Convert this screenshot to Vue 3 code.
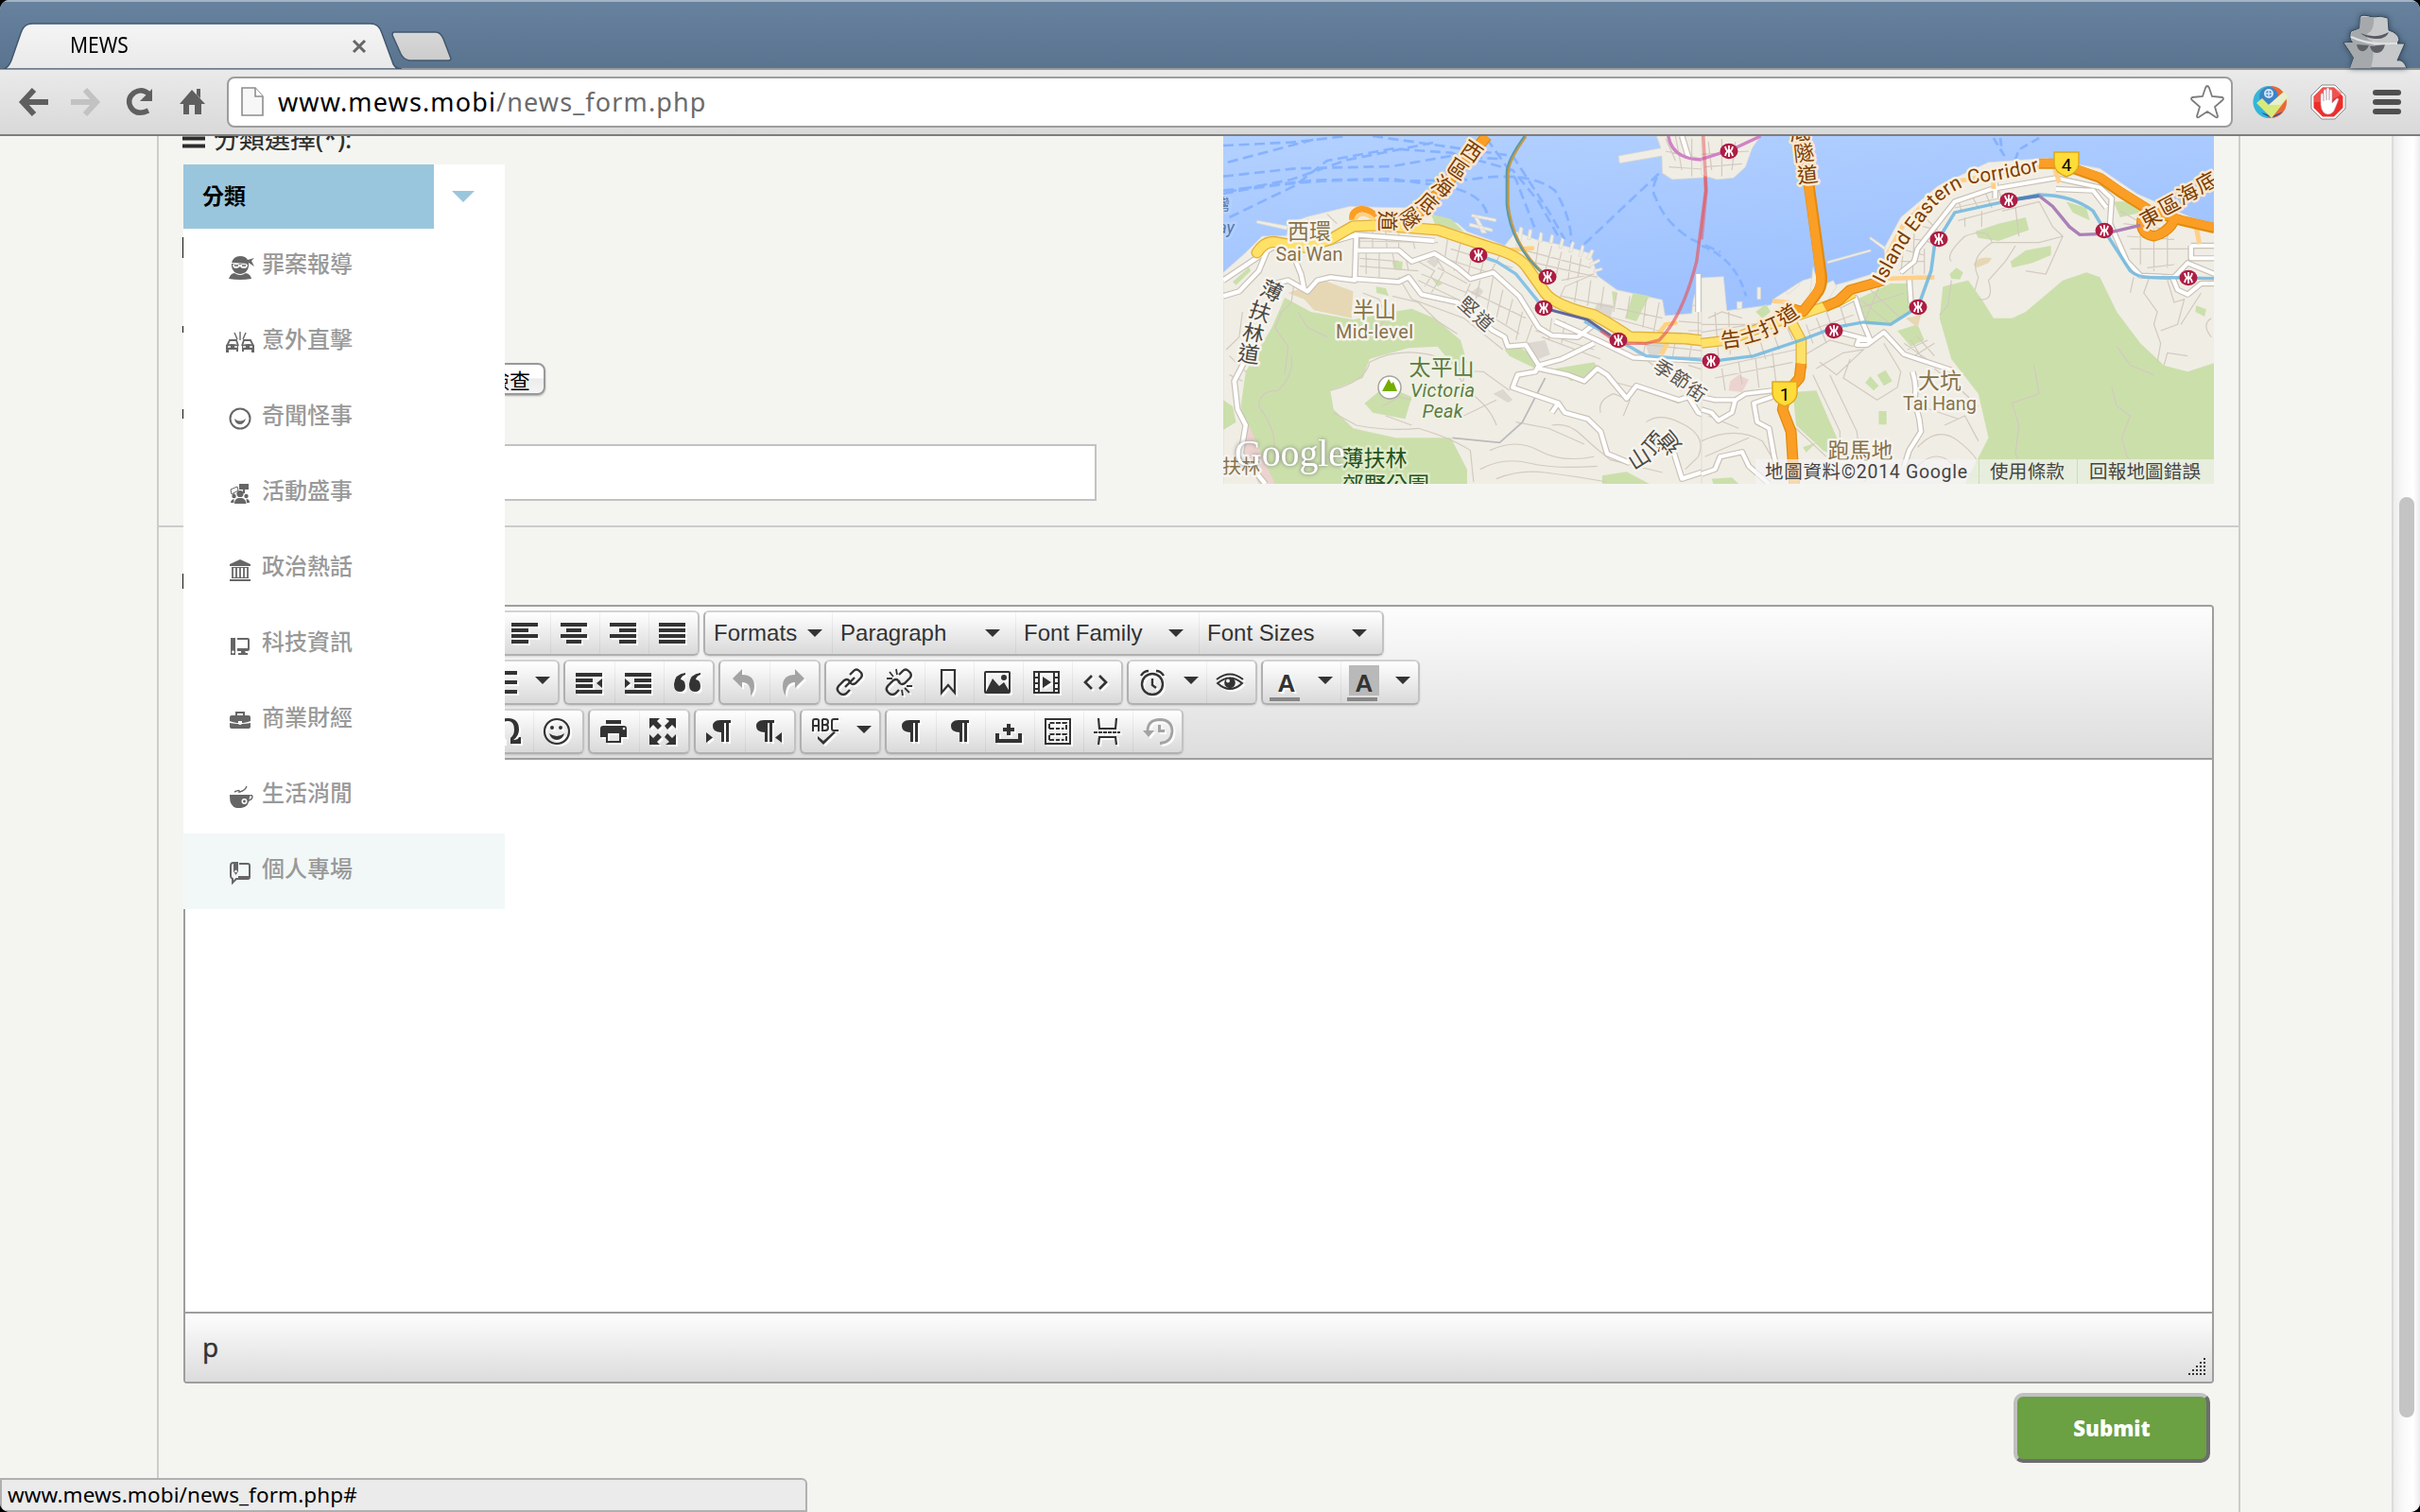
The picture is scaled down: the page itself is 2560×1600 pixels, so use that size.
<script setup>
const categories = [
  { name: '罪案報導', icon: '<path d="M5 9Q7 2 14 2Q20 2 22 6L29 4L26 7L29 13L23 9L23 10Z"/><path d="M5 10H23V13Q22 20 14 21Q6 20 5 13Z"/><path d="M6 11Q10 9 14 11Q18 9 22 11Q22 15 18 15Q15 15 14 13Q12 15 9 15Q6 14 6 11Z" fill="#fff"/><path d="M8 12h4M16 12h4" stroke="#666" stroke-width="1.3"/><path d="M2 26Q4 20 8 20Q14 24 20 20Q25 21 26 26Q14 28 2 26Z"/>' },
  { name: '意外直擊', icon: '<g fill="none" stroke="#666" stroke-width="1.800"><path d="M0 17L3 11H10L12 17"/><path d="M28 17L25 11H18L16 17"/></g><path d="M-1 16Q5 14 12 16V23H10V21H2V24H-1ZM29 16Q23 14 16 16V23H18V21H26V24H29Z"/><path d="M1 18H4M8 18H11M17 18H20M24 18H27" stroke="#fff" stroke-width="1.300"/><path d="M14 11V2M11 10L8 3M17 10L20 3" stroke="#666" stroke-width="1.400"/>' },
  { name: '奇聞怪事', icon: '<circle cx="14" cy="14" r="10.5" fill="none" stroke="#666" stroke-width="2"/><path d="M8 14Q14 19 20 14Q18 20 14 20Q9 20 8 14Z"/>' },
  { name: '活動盛事', icon: '<path d="M13 3h10v6h-4v4h-2V9h-4z"/><path d="M4 9L11 6L12 10L5 14ZM7 13L9 18" fill="none" stroke="#666"/><circle cx="14" cy="13.500" r="3.600"/><path d="M8 24Q8 19 12 18H16Q20 19 20.500 24Z"/><circle cx="7.500" cy="16" r="2.200"/><circle cx="20.500" cy="16" r="2.200"/><path d="M4 23Q4 20 7.500 19V23ZM20.500 19Q24 19 24 23H21Z"/>' },
  { name: '政治熱話', icon: '<path d="M3 8L14 3L25 8V10H3ZM5 11H23V12H5ZM3 24H25V26H3ZM5 22H23V23H5Z"/><path d="M6 12V22M10 12V22M14 12V22M18 12V22M22 12V22" stroke="#666" stroke-width="1.800"/>' },
  { name: '科技資訊', icon: '<path d="M4 6H9V24H4ZM11 6H22Q24 6 24 8V18Q24 20 22 20H19L20 22H22V24H12V22H15V20H11V17H22V8H11Z"/><circle cx="6.5" cy="21" r="1.4" fill="#fff"/>' },
  { name: '商業財經', icon: '<path d="M5 8H9V4H19V8H23Q25 8 25 10V14Q19 16 16 16V14H12V16Q9 16 3 14V10Q3 8 5 8ZM11 6V8H17V6ZM3 16Q9 17 12 17Q14 19 16 17Q20 17 25 16V20Q25 22 23 22H5Q3 22 3 20Z"/>' },
  { name: '生活消閒', icon: '<path d="M3 12H24V14Q24 25 15 26H10Q3 24 3 14Z"/><path d="M8 9Q14 6 13 9Q19 8 21 3M24 13Q27 12 27 14Q27 17 23 18" fill="none" stroke="#666" stroke-width="1.4"/><circle cx="18.500" cy="19" r="3" fill="#fff"/><circle cx="18.500" cy="19" r="1.400"/>' },
  { name: '個人專場', icon: '<path d="M7 4Q4 4 4 7V18Q4 20 6 21V25L10 21H22Q24 21 24 19V7Q24 5 22 5H13" fill="none" stroke="#666" stroke-width="2"/><path d="M7 3H12V13L9.500 17L7 13ZM12 18H24V21H12Z"/><circle cx="9.500" cy="13" r="1.300" fill="#fff"/>' },
]

const pilcrow = '<path d="M13 2H24V5H22V25H19V5H17V25H14V15Q5 15 5 8.500Q5 2 13 2Z"/>'
const link = '<g fill="none" stroke="currentColor" stroke-width="2.400"><path d="M14 6L18 2Q21 -1 24 2L26 4Q28 7 25 10L20 15Q17 17 15 15L13 13"/><path d="M14 22L10 26Q7 28 4 26L2 24Q-.5 21 2 18L8 12Q11 10 13 12L15 14"/>'
const glyphs = {
  left: '<path d="M0 3h28v4H0zM0 9h18v4H0zM0 15h28v4H0zM0 21h18v4H0z"/>',
  center: '<path d="M0 3h28v4H0zM6 9h16v4H6zM0 15h28v4H0zM6 21h16v4H6z"/>',
  right: '<path d="M0 3h28v4H0zM10 9h18v4H10zM0 15h28v4H0zM10 21h18v4H10z"/>',
  justify: '<path d="M0 3h28v4H0zM0 9h28v4H0zM0 15h28v4H0zM0 21h28v4H0z"/>',
  list: '<path d="M10 2h18v4H10zM10 12h18v4H10zM10 22h18v4H10zM2 2h4v4H2zM2 12h4v4H2zM2 22h4v4H2z"/>',
  outdent: '<path d="M0 4h28v4H0zM0 10h18v4H0zM0 16h18v4H0zM0 22h28v4H0zM28 10v10l-6-5z"/>',
  indent: '<path d="M0 4h28v4H0zM10 10h18v4H10zM10 16h18v4H10zM0 22h28v4H0zM0 10v10l6-5z"/>',
  quote: '<path d="M12 4V6Q8 7 7 11Q12 12 12 18Q12 24 6 24Q0 24 0 16Q1 5 12 4ZM28 4V6Q24 7 23 11Q28 12 28 18Q28 24 22 24Q16 24 16 16Q17 5 28 4Z"/>',
  undo: '<path d="M2 10L12 0V6Q25 6 25 18Q25 24 21 28Q22 14 12 14V20Z"/>',
  redo: '<path d="M26 10L16 0V6Q3 6 3 18Q3 24 6 28Q6 14 16 14V20Z"/>',
  link: link + '<path d="M9 19L19 9"/></g>',
  unlink: link + '<path d="M11 0L12 6M4 3L8 8M1 10H7M17 22L18 28M20 20L25 25M22 18H28" stroke-width="1.800"/></g>',
  bookmark: '<path d="M7 1H21V25L14 17L7 25Z" fill="none" stroke="currentColor" stroke-width="2.200"/>',
  image: '<path d="M2 2H26Q28 2 28 4V24Q28 26 26 26H2Q0 26 0 24V4Q0 2 2 2ZM2 4V24H26V4ZM2 24L9 10L16 18L21 14L26 22V24Z"/><circle cx="21" cy="9" r="3"/>',
  media: '<path d="M0 2H28V26H0ZM2 4V8H5V4ZM2 10V14H5V10ZM2 16V20H5V16ZM2 22V24H5V22ZM7 4V24H21V4ZM23 4V8H26V4ZM23 10V14H26V10ZM23 16V20H26V16ZM23 22V24H26V22ZM10 8L19 14L10 20Z" fill-rule="evenodd"/>',
  code: '<path d="M10 7L3 14L10 21M18 7L25 14L18 21" fill="none" stroke="currentColor" stroke-width="2.700"/>',
  clock: '<g fill="none" stroke="currentColor" stroke-width="2.400"><circle cx="14" cy="16" r="11"/><path d="M14 10V17L18 20M2 7Q5 2 10 2M26 7Q23 2 18 2"/></g>',
  eye: '<g fill="none" stroke="currentColor" stroke-width="2"><path d="M1 15Q14 4 27 15Q14 27 1 15Z"/><path d="M0 11Q14 0 28 11"/></g><circle cx="14" cy="14.500" r="5.800"/><circle cx="12" cy="12.500" r="2" fill="#eee"/>',
  omega: '<path d="M2 27V20H4Q5 23 9 23Q2 19 2 12Q2 0 14 0Q26 0 26 12Q26 19 20 23Q25 23 26 20H28V27H17V21Q21 18 21 12Q21 3 14 3Q7 3 7 12Q7 18 11 21V27Z"/>',
  smile: '<circle cx="14" cy="14" r="13" fill="none" stroke="currentColor" stroke-width="2.200"/><circle cx="9" cy="10" r="2"/><circle cx="18" cy="10" r="2"/><path d="M6 16Q14 22 22 16Q20 23 14 23Q8 23 6 16Z"/>',
  print: '<path d="M6 2H22V6H6ZM3 8H25Q28 8 28 11V20H22V16H6V20H0V11Q0 8 3 8Z"/><path d="M7 15H21V25H7Z" fill="none" stroke="currentColor" stroke-width="2"/><circle cx="25" cy="11" r="1.300" fill="#fff"/>',
  expand: '<path d="M0 0H11L8 3L13 8L9 12L4 7L0 11ZM28 0V11L24 7L19 12L16 8L21 3L17 0ZM0 28V17L4 21L9 16L13 20L8 25L11 28ZM28 28H17L21 25L16 20L19 16L24 21L28 17Z"/>',
  ltr: '<g transform="translate(2)">' + pilcrow + '</g><path d="M0 15v11l7-5.500z"/>',
  rtl: '<g transform="translate(-4)">' + pilcrow + '</g><path d="M28 15v11l-7-5.500z"/>',
  spell: '<path d="M1 14V3Q1 1 3 1H5Q7 1 7 3V14M1 8H7M11 1V13H14Q17 13 17 10T14 7H11M11 1H14Q17 1 17 4T14 7M28 1H23Q21 1 21 3V11Q21 13 23 13H28" fill="none" stroke="currentColor" stroke-width="2"/><path d="M6 19L12 24L23 14L25 15L12 28L6 22Z"/>',
  pilcrow,
  nbsp: '<path d="M0 16H4V22H24V16H28V26H0ZM12 6H16V10H20V14H16V18H12V14H8V10H12Z"/>',
  template: '<path d="M1 1H27V27H1Z" fill="none" stroke="currentColor" stroke-width="2"/><path d="M5 11V5H23V11H18M16 11H12M10 11H5M5 23V17H23V23H18M16 23H12M10 23H5" fill="none" stroke="currentColor" stroke-width="2" stroke-dasharray="5 1.500"/>',
  pagebreak: '<path d="M5 0L6 11H23L24 0M5 28L6 20H23L24 28" fill="none" stroke="currentColor" stroke-width="2.200"/><path d="M0 15H28" stroke="currentColor" stroke-width="2" stroke-dasharray="4 1"/>',
  restore: '<path d="M5 14Q5 1.500 18 1.500Q31 2 31 14Q30 26 18 26.500" fill="none" stroke="currentColor" stroke-width="2.800"/><path d="M0 13H12L6 20ZM16 7H19V12H23V15H16Z"/>',
}

const rows = [
  { offset: 332, groups: [
    [{ i: 'left' }, { i: 'center' }, { i: 'right' }, { i: 'justify' }],
    [{ t: 'Formats', w: 134 }, { t: 'Paragraph', w: 194 }, { t: 'Font Family', w: 194 }, { t: 'Font Sizes', w: 194 }],
  ] },
  { offset: 228, groups: [
    [{ i: 'list', s: 1 }, { i: 'list', s: 1 }],
    [{ i: 'outdent' }, { i: 'indent' }, { i: 'quote' }],
    [{ i: 'undo', d: 1 }, { i: 'redo', d: 1 }],
    [{ i: 'link' }, { i: 'unlink' }, { i: 'bookmark' }, { i: 'image' }, { i: 'media' }, { i: 'code' }],
    [{ i: 'clock', s: 1 }, { i: 'eye' }],
    [{ a: 1, s: 1 }, { a: 2, s: 1 }],
  ] },
  { offset: 314, groups: [
    [{ i: 'omega' }, { i: 'smile' }],
    [{ i: 'print' }, { i: 'expand' }],
    [{ i: 'ltr' }, { i: 'rtl' }],
    [{ i: 'spell', s: 1 }],
    [{ i: 'pilcrow' }, { i: 'pilcrow' }, { i: 'nbsp' }, { i: 'template' }, { i: 'pagebreak' }, { i: 'restore', d: 1 }],
  ] },
]

const stations = [[270, 126], [343, 149], [339, 182], [418, 216], [516, 238], [535, 16], [831, 68], [757, 109], [932, 100], [735, 181], [646, 206], [1021, 150]]

const labels = [
  { c: 'place', t: '西環', x: 91, y: 109, s: 23 },
  { c: 'place', t: 'Sai Wan', x: 91, y: 132, s: 20, w: 71 },
  { c: 'place', t: '半山', x: 160, y: 192, s: 23 },
  { c: 'place', t: 'Mid-level', x: 160, y: 214, s: 20, w: 82 },
  { c: 'park', t: '太平山', x: 231, y: 253, s: 23 },
  { c: 'park it', t: 'Victoria', x: 232, y: 276, s: 20, w: 68 },
  { c: 'park it', t: 'Peak', x: 232, y: 298, s: 20, w: 43 },
  { c: 'wood', t: '薄扶林', x: 160, y: 349, s: 23 },
  { c: 'wood', t: '郊野公園', x: 172, y: 377, s: 23 },
  { c: 'place', t: '扶林', x: 19, y: 357, s: 20 },
  { c: 'place', t: '大坑', x: 758, y: 267, s: 23 },
  { c: 'place', t: 'Tai Hang', x: 758, y: 290, s: 20, w: 78 },
  { c: 'place', t: '跑馬地', x: 674, y: 341, s: 23 },
  { c: 'bay it', t: 'ay', x: 3, y: 103, s: 18 },
  { c: 'bay', t: '灣', x: -1, y: 78, s: 16 },
]

const turned = [
  ['road', '薄', 51, 164, 24], ['road', '扶', 39, 186, 18], ['road', '林', 32, 209, 12], ['road', '道', 27, 231, 8],
  ['road sm', '堅', 260, 180, 42], ['road sm', '道', 276, 195, 42],
  ['road sm', '季', 466, 246, 34], ['road sm', '節', 484, 257, 34], ['road sm', '街', 501, 270, 34],
  ['road', '山', 440, 341, -32], ['road', '頂', 456, 325, -48], ['road', '道', 472, 324, -130],
  ['tunnel', '西', 263, 16, 34], ['tunnel', '區', 248, 35, 34], ['tunnel', '海', 232, 53, 36], ['tunnel', '底', 216, 71, 42], ['tunnel', '隧', 197, 87, 56], ['tunnel', '道', 174, 90, 90],
  ['tunnel', '底', 610, -4, -5], ['tunnel', '隧', 614, 18, -6], ['tunnel', '道', 618, 41, -6],
  ['tunnel', '告', 537, 215, -8], ['tunnel', '士', 558, 210, -16], ['tunnel', '打', 578, 202, -24], ['tunnel', '道', 597, 189, -34],
  ['tunnel', '東', 981, 86, -28], ['tunnel', '區', 1001, 73, -28], ['tunnel', '海', 1020, 61, -28], ['tunnel', '底', 1040, 49, -28],
]
</script>

<template>
  <div class="window">
    <header class="tabs">
      <svg class="tabshape" width="500" height="72" viewBox="0 0 500 72">
        <defs>
          <linearGradient id="tabfill" x2="0" y2="1"><stop stop-color="#f5f5f5" /><stop offset="1" stop-color="#e9e9e9" /></linearGradient>
          <linearGradient id="newfill" x2="0" y2="1"><stop stop-color="#d8d8d8" /><stop offset="1" stop-color="#cccccc" /></linearGradient>
        </defs>
        <path d="M0 72H4Q10 70 13 60L22 34Q25 24 34 24H392Q401 24 404 34L415 64Q417 72 425 72Z" fill="url(#tabfill)" stroke="#42576d" stroke-width="1.500" />
        <path d="M417 33H461Q466 33 469 40L477 61Q477 63 474 63H433Q427 62 424 56L415 36Q415 33 417 33Z" fill="url(#newfill)" stroke="#42576d" stroke-width="1.500" />
        <path d="M374 42L386 54M386 42L374 54" stroke="#666" stroke-width="3" />
      </svg>
      <span class="tabtitle">MEWS</span>
      <svg class="incognito" width="76" height="58" viewBox="0 0 76 58">
        <g stroke="#33475b" stroke-width="1">
          <path d="M10 58L14 47L3 31H13Q8 26 11 19L20 16L21 3Q24 1 34 4Q43 2 50 5L51 18Q61 21 62 28L60 32H68L60 50Q66 48 70 58Z" fill="#c6c8ca" />
        </g>
        <path d="M10 58L14 47L4 31H13Q9 26 12 20L20 16L21 4L35 4Q36 13 32 19Q22 25 34 30Q36 45 32 58Z" fill="#a6a9ac" />
        <path d="M21 21Q36 28 51 20Q48 28 36 27Q26 26 21 21Z" fill="#555b61" />
        <path d="M17 33L30 34Q27 41 22 40Q18 39 17 33ZM31 35L47 33Q45 42 38 42Q33 42 31 35Z" fill="#5d6064" />
        <path d="M11 25Q30 34 54 32L60 32" fill="none" stroke="#e0e1e2" stroke-width="2" />
      </svg>
    </header>

    <div class="toolbar">
      <svg class="nav" width="220" height="44" viewBox="0 0 220 44">
        <g fill="none" stroke="#5f5f5f" stroke-width="6">
          <path d="M51 22H25M36 9L24 22L36 35" />
          <path d="M75 22H101M90 9L102 22L90 35" stroke="#c2c2c2" />
          <path d="M157 13Q150 7 142 12Q134 18 138 27Q144 37 157 31" stroke-width="5.500" />
        </g>
        <path d="M161 8V21H148Z" fill="#5f5f5f" />
        <path d="M203 9L217 24H213V35H206V25H200V35H194V24H190ZM208 8H212V18L208 14Z" fill="#5f5f5f" />
      </svg>
      <div class="omnibox">
        <svg width="26" height="34" viewBox="0 0 26 34"><path d="M2 2H16L24 11V31H2Z" fill="#f7f7f7" stroke="#8d8d8d" stroke-width="1.600" /><path d="M16 2V11H24" fill="#fff" stroke="#8d8d8d" stroke-width="1.600" /></svg>
        <span class="url">www.mews.mobi<i>/news_form.php</i></span>
        <svg class="star" width="38" height="38" viewBox="0 0 38 38"><path d="M19 2Q20 2 21 4L24 13L35 14Q37 15 35 17L27 24L30 34Q30 36 28 35L19 29L10 35Q8 36 8 34L11 24L3 17Q1 15 3 14L14 13L17 4Q18 2 19 2Z" fill="#fff" stroke="#7c7c7c" stroke-width="1.800" /></svg>
      </div>
      <div class="extras">
        <svg width="40" height="38" viewBox="0 0 40 38">
          <circle cx="20" cy="19" r="17" fill="#e9683a" /><path d="M20 2A17 17 0 0 0 17 36L22 20Z" fill="#34b5d8" /><circle cx="18" cy="13" r="10" fill="#3f83c5" /><path d="M10 30Q22 40 33 29L22 34Z" fill="#2d4fa0" />
          <circle cx="18" cy="10" r="4" fill="none" stroke="#cfe6fb" stroke-width="2" /><path d="M18 6V14M14 10H22" stroke="#cfe6fb" stroke-width="1.500" />
          <path d="M5 20L11 15L18 22L34 8L39 13L21 36Z" fill="#d8ea7a" /><path d="M18 22L34 8L39 13L30 22Z" fill="#e8efcf" />
        </svg>
        <svg width="38" height="38" viewBox="0 0 38 38">
          <path d="M12 1H26L37 12V26L26 37H12L1 26V12Z" fill="#fff" stroke="#888" /><path d="M13 3.500H25L34.500 13V25L25 34.500H13L3.500 25V13Z" fill="#ee2d2a" /><path d="M4 19Q24 20 34 9L25 3.500H13L3.500 13Z" fill="#f26b66" opacity=".6" />
          <path d="M11 22V11Q12 8 14 11V18V7Q15 4 17 7V17V5Q18.500 3 20 5V17V7Q22 4 23 7V20L27 16Q29 14 30 16L26 26Q24 32 18 32Q12 31 11 22Z" fill="#fff" stroke="#b9a" stroke-width=".6" />
        </svg>
        <svg width="32" height="28" viewBox="0 0 32 28"><g fill="#4f4f4f"><rect x="1" y="1" width="30" height="6" rx="3" /><rect x="1" y="11" width="30" height="6" rx="3" /><rect x="1" y="21" width="30" height="6" rx="3" /></g></svg>
      </div>
    </div>

    <div class="viewport">
      <main class="card">
        <section class="top">
          <div class="fields">
            <h2><svg width="24" height="22" viewBox="0 0 24 22"><path d="M0 2h24M0 10.500h24M0 18.500h24" stroke="#2d2d2d" stroke-width="4" /></svg><span>分類選擇(*):</span></h2>
            <div class="check"><button>檢查</button></div>
            <div class="input"></div>
          </div>
          <svg class="map" width="1048" height="368" viewBox="0 0 1048 368">
            <defs>
              <linearGradient id="sea" x1="0" x2=".25" y2="1"><stop stop-color="#b3d1ff" /><stop offset=".5" stop-color="#a0c3ff" /><stop offset="1" stop-color="#93b9ff" /></linearGradient>
              <path id="corridor" d="M699 157Q721 114 741 90Q761 60 793 50Q830 46 871 35" />
              <path id="roadsWest" d="M41 550L90 535L150 470L180 395L300 400L450 355L690 375M450 350L445 500L370 490L330 500L300 535L240 500L200 510M260 430L280 480L290 530M41 500L200 390L350 390M445 495L580 505L610 490L650 545L760 570L870 660L905 680L915 710L970 705L1010 770L1080 750L1180 700M455 405L580 405L620 440L690 415L760 460L800 495L870 475L950 550L1010 650L1050 675L1130 680L1180 640M1060 630L1190 690L1300 745L1568 758M1010 770L1000 790L945 800L930 840L1070 890L1050 920M1070 890L1090 920L1160 940L1200 980L1220 1050L1290 1080M1010 780L1100 800L1150 820L1190 780L1220 800L1280 875L1310 835L1440 880L1470 870L1500 920L1568 945M120 730L75 820L85 910L110 960L95 1050L170 1146M1420 1030L1450 1130L1568 1090M1450 42L1470 110M1500 480V600" />
              <path id="roadsEast" d="M410 580L455 555L480 640L500 690L465 690L460 705L490 705L540 665L600 735L740 785M410 665L500 690M625 790Q640 840 630 880L645 940L650 980L615 1040L600 1090M615 490L620 570M590 475L630 440L640 400L750 250L860 210L1050 175L1180 205L1215 240L1210 320L1260 440L1300 485L1400 490L1440 445L1520 480M1050 210L1160 215L1200 270M870 190V240M1395 490L1410 530L1440 545L1480 510L1518 510M1450 390H1518M1450 390V430H1518M0 870L40 880L100 880L130 860L210 850M210 870L155 890L165 950L200 970L215 1060L230 1120M0 910L30 920L50 945L90 920L100 880M0 1115L40 1100L55 1060L120 1045L140 1090L200 1146" />
            </defs>
            <rect width="1048" height="368" fill="url(#sea)" />

            <g transform="translate(-14.100 -14) scale(.3444 .3333)" fill="none">
              <g stroke="#86b2ff" stroke-width="8" stroke-dasharray="32 16">
                <path d="M41 72L250 62L420 42M55 125L330 50M41 170L260 145L560 138L740 105L900 115M41 215L320 182L560 178L740 205Q850 230 855 310M50 220L250 180L420 118L700 60M60 300L260 200L360 120L560 82L740 95L930 150L1010 250L1070 360M41 225Q300 170 600 185L800 180Q980 150 1060 215Q1110 300 1110 380M850 50L940 180L1000 340M1150 385L1380 160Q1350 210 1370 240Q1400 320 1480 370L1568 410M500 42L930 105L1040 280L1090 370" />
              </g>
              <g fill="#f0ede5" stroke="#d9d6cd" stroke-width="2">
                <path d="M41 475L110 412L160 360L235 358L245 318L300 298L430 265L520 268L640 270L690 300L760 318L790 345L870 375L905 390L940 345L1000 370L1080 388L1170 415L1190 485L1250 530L1390 562L1398 612L1480 605L1485 560L1505 495L1568 490V1150H41Z" />
                <path d="M1372 42L1385 80L1255 105L1258 128L1388 105L1390 160L1420 180L1568 170V42Z" />
                <path d="M145 310L240 328L236 340L143 318ZM805 290L880 305L878 314L803 298ZM798 318L868 337V346L796 328ZM820 295L850 350H835L812 300ZM952 330L940 390H953L962 335ZM980 338L975 370H985L990 340ZM1014 347L1008 378H1020L1022 350ZM1048 354L1042 382H1053L1056 358ZM1080 365L1072 398H1082L1088 370ZM1112 376L1102 410H1112L1120 380ZM1142 388L1133 424H1143L1150 392ZM1172 402L1155 430L1168 435L1180 405ZM1196 432L1165 447L1170 455L1198 440ZM1205 460L1180 466V475L1205 467Z" />
              </g>
              <g fill="#cbdfab">
                <path d="M230 555L310 600L440 625L560 600L620 590L690 620L770 690L790 760L770 800L700 710L610 715L490 750L470 810L370 850L380 910L440 970L570 1000L740 1000L790 1100V1146H190L120 1040L95 900L110 790L190 650ZM41 880L70 900L80 950L41 975ZM475 890L540 835L620 870L600 940L500 920ZM1205 1120L1280 1108L1350 1146H1205ZM905 720L950 710L1010 755L1000 780L920 740ZM1060 780L1180 760L1200 790L1110 820ZM1300 540L1350 550L1310 630L1275 620ZM680 290L740 305L780 345L690 320ZM510 520L540 525L550 550L512 540ZM675 485L715 510L700 520ZM70 505L120 458L125 470L80 515ZM560 440L592 440L590 468L565 465ZM1235 535L1250 537L1240 590ZM1325 1020l12 10-5 20-12-10z" />
              </g>
              <path d="M240 540L350 500L440 535L435 620L320 595L290 560Z" fill="#e6d8b4" /><path d="M970 700L1030 690L1045 735L1010 750ZM870 860L900 845L930 880L915 888ZM1190 570L1240 580L1230 620L1180 600ZM665 440L685 425L705 440L690 460ZM800 540L825 520L840 535L825 555ZM1340 710L1400 690L1390 735L1350 740Z" fill="#dcd7d0" />
              <path d="M120 960L170 1080L200 1146H150L100 1040Z" fill="#ecd3d0" />
              <g stroke="#d3cabf" stroke-width="3.500">
                <path d="M240 330L260 370M300 305L320 355M360 290L390 320M460 350V395M500 345V410M540 345L545 410M580 350V405M620 360L630 400M460 375L700 380M460 430L580 440M480 410V480M520 410V490M560 410L570 460M600 420L610 470M460 455L640 470M640 440L690 470L660 520M690 420L720 470L680 540M730 370L720 440M770 380L750 470M810 390L790 500M850 400L830 480M890 420L860 480M740 400L930 460M720 430L900 490M700 460L790 510M640 500L780 570M650 480L790 540M800 510L770 580M830 500L810 590M870 490L850 600M900 530L880 620M930 560L910 640M790 530L970 620M780 560L950 670M960 600L940 690M990 640L970 700M1010 380L1000 450M1050 390L1030 470M1080 410L1060 500M1110 420L1100 500M1140 430L1130 490M950 400L1170 460M980 440L1190 490M1080 500L1180 480L1090 520L1060 590M1130 500L1120 570M1170 500L1160 580M1210 520L1200 590M1250 540L1240 600M1290 550L1280 620M1340 560L1330 650M1380 570L1360 680M1080 550L1390 620M1100 580L1380 660M1310 700L1568 730M1340 690L1330 740M1430 690L1420 750M1480 700L1470 760M1530 700L1525 750M1500 540V680M1540 520V690M1485 580H1568M1440 630L1568 640M1470 660H1568M1000 660L1180 720M1020 680L1200 750M1050 620L1040 690M1090 630L1080 700M1400 50L1430 120M1430 42L1450 150M1480 50V170M1400 90L1540 120M1410 140L1560 150M1540 60L1568 140" />
                <path d="M260 500L250 570L220 600L200 650L240 710L230 800M270 600L300 650L360 680M250 740Q260 800 210 850Q150 850 150 900Q180 940 195 990L200 1060M370 850Q480 820 490 760Q580 710 690 740Q770 800 790 850Q860 900 880 960M380 920L450 960Q550 980 640 970Q740 1000 800 1040L810 1140M530 900L580 870L620 880M700 900L780 930L880 880M790 870Q750 780 840 790L920 850M540 930L620 960M470 540L520 560L540 620L500 680M560 550L640 570L700 630L760 670M580 490L620 560L780 620L900 720M1200 920Q1190 880 1240 860L1290 880L1270 930M1230 820L1340 850L1440 890M1340 950Q1380 920 1440 950Q1530 990 1500 1060L1460 1100M860 1040Q940 1000 1010 1040T1180 1060M830 1100Q900 1060 980 1080T1190 1090M880 1130Q950 1100 1030 1110T1220 1140M1050 960Q1100 950 1140 990T1230 1070L1390 1110M940 950L1040 970L1150 1020M100 600L90 680L50 720M60 740L110 790M60 800L100 820M270 1060L310 1080M1300 720L1400 800L1568 850M1380 780L1450 850M1470 770L1568 800" />
              </g>
              <path d="M1030 810L960 950L890 1015L745 1000" stroke="#bcb9bb" stroke-width="5" />
              <g stroke-linejoin="round"><use href="#roadsWest" stroke="#c9c1b6" stroke-width="20" /><use href="#roadsWest" stroke="#fff" stroke-width="13" /></g>
              <path d="M905 405L990 398M1390 730L1410 690M1370 680L1400 640L1430 635" stroke="#ffd27f" stroke-width="14" stroke-linecap="round" />
              <g stroke-linecap="round" stroke-linejoin="round">
                <path d="M145 412Q170 370 210 380L290 395L370 370L440 328L520 325L700 340L860 395Q950 420 975 460L1030 540Q1060 580 1180 610Q1250 650 1290 680L1460 685L1570 698" stroke="#e0b13a" stroke-width="37" />
                <path d="M145 412Q170 370 210 380L290 395L370 370L440 328L520 325L700 340L860 395Q950 420 975 460L1030 540Q1060 580 1180 610Q1250 650 1290 680L1460 685L1570 698" stroke="#ffe168" stroke-width="29" />
              </g>
              <path d="M438 308Q434 278 467 273Q498 278 510 298" stroke="#fb9e25" stroke-width="20" />
              <path d="M448 310Q450 290 470 290Q490 292 505 308" stroke="#ffd27f" stroke-width="12" />
              <path d="M850 42L780 130L660 270L600 320" stroke="#e08a10" stroke-width="36" /><path d="M850 42L780 130L660 270L600 320" stroke="#fb9e25" stroke-width="29" />
              <path d="M970 42Q915 120 915 160V260Q930 400 1037 490" stroke="#c89a45" stroke-width="10" /><path d="M966 42Q911 120 911 160V260Q926 400 1037 490" stroke="#5a9ba8" stroke-width="6" />
              <path d="M825 420L880 440L940 480L1025 588M1150 630L1254 690L1340 740L1568 758" stroke="#87c3e5" stroke-width="10" />
              <path d="M1025 588L1160 625L1230 675" stroke="#61679b" stroke-width="9" />
              <path d="M1517 42L1523 215L1495 440Q1450 620 1380 690L1340 700H1254L1200 660" stroke="#e6565c" stroke-opacity=".65" stroke-width="10" />
              <path d="M1408 42Q1420 115 1510 117L1568 105" stroke="#cf83c6" stroke-width="10" />
            </g>

            <g transform="translate(506 -14) scale(.3571 .3333)" fill="none">
              <g fill="#f0ede5" stroke="#d9d6cd" stroke-width="2">
                <path d="M0 492L65 488L75 596L205 578L215 558L300 500L340 488L360 525L430 505L550 465L540 400L590 300L700 200L850 125L1020 112L1180 145L1290 225L1450 300L1520 320V1150H0Z" />
                <path d="M0 165L45 180L95 175L130 140L150 80L175 42H0Z" />
                <path d="M372 440L500 402L502 408L374 446ZM500 362L545 395L540 402L498 368ZM288 508L250 535L255 545L290 514ZM330 458L350 520L390 500L400 520L370 570L320 560ZM165 522H175V560H165ZM105 568H120V590H105Z" />
              </g>
              <g fill="#cbdfab">
                <path d="M715 520L790 500L830 560L865 620L920 620L960 600L1070 500L1140 475L1180 490L1230 600L1300 700L1370 770L1440 790L1520 762V1146H780L850 1000L820 860L740 750L705 620ZM460 560L560 510L620 510L620 600L560 640L490 640ZM580 660L640 640L660 690L620 710ZM270 855L340 850L405 1010L400 1060L360 1040L280 960ZM915 440L960 405L1035 390V420L980 445L920 460ZM810 345L880 320L960 300L970 340L880 375L820 365ZM735 480L755 460L775 475L765 497L740 495ZM525 915H548V958H525ZM485 825L500 805L525 835L510 850ZM520 800L545 785L565 820L540 835ZM160 600L190 575L205 600L180 620ZM30 1130L90 1126L110 1146H35ZM1220 250L1280 250L1320 280L1240 300ZM1080 250L1140 270L1150 310L1100 285ZM1465 580L1495 592L1490 615L1463 600ZM300 1030L340 1015L310 1046Z" />
              </g>
              <path d="M805 450Q820 420 860 430L850 445L815 460ZM605 620L650 610L640 650Z" fill="#e6d8b4" /><path d="M85 820L110 800L140 815L120 855L80 850Z" fill="#ecd3d0" />
              <g stroke="#d3cabf" stroke-width="3.500">
                <path d="M20 60L30 150M60 50V170M100 60L90 150M0 100L140 90M10 140L120 130M20 620L60 600L120 620M0 640L260 640M0 665L270 620M40 600L50 740M80 600L85 735M130 690L150 750M170 680L190 750M210 660L230 720M250 640L270 690M20 780L280 720M40 810L270 760M60 780L70 850M110 760L120 830M160 750L170 840M210 730L220 820M310 640L330 700M340 620L370 700M370 600L390 660M410 580L430 650M320 660L450 610M300 740L380 690L450 710M340 780L420 730L480 720L400 800L350 760M440 750L420 810L520 880L580 840L590 790L540 700M330 800L410 980L410 1060M380 800L460 980L470 1060M600 700L680 760M610 720L670 690M630 740L690 700M620 690L660 760M640 680L690 740M470 560L560 640M500 530L590 620M460 590L600 540M530 510L480 640M590 400L660 420M600 360L680 380M620 320L700 340M650 290L690 330M600 380L590 480M630 350L625 480M660 400V480M590 440H660M720 300L740 260M760 240L770 280M800 230L820 270M840 220L860 270M880 210L890 250M750 270L880 240M760 310L900 270M780 300V330M830 280V330M930 270L940 360M890 280L1000 250M740 440Q720 420 780 360Q850 330 860 380L1000 380L1070 360M860 380Q790 430 820 490L810 530M820 560Q870 570 850 500L900 440L930 390M1000 250L1040 330L1070 360L1020 480L960 470M740 500L730 580L705 610M1240 280L1290 310M1250 320L1400 340M1260 360L1400 370M1270 400L1450 400M1300 310V450M1340 320V470M1380 330V460M1320 460L1400 450M1450 400V430M1330 480L1310 540L1350 600L1340 640L1360 700L1350 760M1380 500L1400 570L1430 560L1410 640L1360 660M1280 490L1270 540M1480 540L1420 640M1510 620Q1480 640 1510 680M1230 710L1270 770L1340 800M1370 770L1380 730L1440 740M985 770L1000 860L920 890L940 960L930 1050L960 1130M1215 840L1230 900L1270 930L1245 1000L1260 1060L1310 1120M0 1010Q100 960 180 1010L230 1100M10 1060L140 1000M20 930L110 970M560 1060L480 1140M640 1030Q700 960 760 1010T820 1090M630 1100Q690 1030 740 1080T840 1120M720 960L780 930L820 1010M690 780L760 840L820 900M650 900L760 940M270 960L370 1060" />
              </g>
              <g stroke-linejoin="round"><use href="#roadsEast" stroke="#c9c1b6" stroke-width="19" /><use href="#roadsEast" stroke="#fff" stroke-width="12" /></g>
              <path d="M555 470L550 420L600 320L700 215L760 185L860 165L1000 140M540 495L690 490M1465 330L1475 385M1045 140L1060 190M865 190V210M210 565L260 570" stroke="#ffd08a" stroke-width="14" />
              <path d="M0 700L80 690L200 640L290 610L400 570L450 540M270 640L295 690V780" stroke="#e0b13a" stroke-width="33" /><path d="M0 700L80 690L200 640L290 610L400 570L450 540M270 640L295 690V780" stroke="#ffe168" stroke-width="26" />
              <g stroke-linejoin="round">
                <path d="M295 42L320 210L355 480Q360 520 340 545L300 600L270 590M365 585L405 565L440 530L540 500M1000 130H1060L1180 175L1240 220L1330 280L1420 310L1520 335M1310 290Q1290 350 1340 360Q1380 350 1400 310M295 765L290 810L250 860L240 910L265 980L275 1150" stroke="#e28b0c" stroke-width="33" />
                <path d="M293 42L318 210L352 480Q357 520 337 545L300 600L270 590M365 585L405 565L440 530L540 500M1000 128H1060L1180 172L1240 218L1330 278L1420 308L1520 332M1310 290Q1290 350 1340 360Q1380 350 1400 310M295 765L290 810L250 860L240 910L265 980L275 1150" stroke="#fb9e25" stroke-width="26" />
              </g>
              <path d="M28 757L155 740L300 688L392 650L480 633L560 640L641 585L680 470L690 390L750 285L910 247L1000 228Q1100 230 1160 280L1210 370L1270 470Q1290 490 1330 490L1520 494" stroke="#6db6de" stroke-opacity=".85" stroke-width="10" />
              <path d="M910 247L1000 232L1040 265L1090 330L1120 355L1193 352L1300 325" stroke="#ab7fb7" stroke-width="10" /><path d="M910 246L1000 231" stroke="#5184b8" stroke-width="10" />
              <path d="M0 115L90 85L175 42" stroke="#cf83c6" stroke-width="10" /><path d="M5 42L14 215L0 370" stroke="#e6565c" stroke-opacity=".5" stroke-width="10" />
              <path d="M0 390Q100 430 132 550M865 48L900 110M885 48L890 90M1000 48L940 85L930 115" stroke="#86b2ff" stroke-width="8" stroke-dasharray="26 14" />
            </g>

            <g v-for="(s, n) in stations" :key="n" :transform="`translate(${s[0]} ${s[1]})`">
              <ellipse rx="9.500" ry="8.200" fill="#ad1d44" /><path d="M0-6V6M-4-5Q-3 0 0 0Q3 0 4-5M-4 5Q-3 0 0 0Q3 0 4 5" fill="none" stroke="#fff" stroke-width="1.800" />
            </g>
            <g v-for="r in [[892, 30, '4'], [594, 273, '1']]" :key="r[2]" :transform="`translate(${r[0]} ${r[1]})`">
              <path d="M-13-13H13V0Q12 9 0 13Q-12 9-13 0Z" fill="#ffdc37" stroke="#dba71c" stroke-width="1.500" /><text y="7" class="shield">{{ r[2] }}</text>
            </g>
            <circle cx="176" cy="266" r="12" fill="#fff" stroke="#a4a49c" stroke-width="1.500" /><path d="M168 270L175 257L178 262L180 260L184 270Z" fill="#74ad00" />

            <text v-for="l in labels" :key="l.t + l.x" :class="['lbl', l.c]" :x="l.x" :y="l.y" :font-size="l.s" :textLength="l.w">{{ l.t }}</text>
            <text v-for="(t, n) in turned" :key="'t' + n" :class="['lbl', t[0]]" :transform="`translate(${t[2]} ${t[3]}) rotate(${t[4]})`" y="8">{{ t[1] }}</text>
            <text class="lbl tunnel corridor"><textPath href="#corridor" textLength="218">Island Eastern Corridor</textPath></text>
            <text x="12" y="349" class="logo" textLength="117">Google</text>
            <rect x="563" y="342" width="485" height="26" fill="#f5f5f5" fill-opacity=".68" />
            <path d="M799.500 342V368M903.500 342V368" stroke="#cbdfab" />
            <g class="legal"><text x="573" y="362" textLength="214">地圖資料©2014 Google</text><text x="811" y="362" textLength="79">使用條款</text><text x="916" y="362" textLength="118">回報地圖錯誤</text></g>
          </svg>
        </section>

        <section class="edit">
          <div class="editor">
            <div class="bars">
              <div v-for="(row, r) in rows" :key="r" class="bar">
                <div v-for="(g, k) in row.groups" :key="k" class="group" :style="k ? null : { marginLeft: row.offset + 'px' }">
                  <div v-for="(b, n) in g" :key="n" class="btn" :class="{ split: b.s, off: b.d, text: b.t }" :style="b.w ? { width: b.w + 'px' } : null">
                    <svg v-if="b.i" width="28" height="28" viewBox="0 0 28 28" fill="currentColor" fill-rule="evenodd" overflow="visible" v-html="glyphs[b.i]"></svg>
                    <span v-if="b.a" class="letter" :class="{ shade: b.a === 2 }">A</span>
                    <span v-if="b.t">{{ b.t }}</span>
                    <i v-if="b.s || b.t" class="caret"></i>
                  </div>
                </div>
              </div>
            </div>
            <div class="page"></div>
            <div class="status">
              <span>p</span>
              <svg width="18" height="18" viewBox="0 0 18 18"><path d="M16 0h2v2h-2zM12 4h2v2h-2zM16 4h2v2h-2zM8 8h2v2H8zM12 8h2v2h-2zM16 8h2v2h-2zM4 12h2v2H4zM8 12h2v2H8zM12 12h2v2h-2zM16 12h2v2h-2zM0 16h2v2H0zM4 16h2v2H4zM8 16h2v2H8zM12 16h2v2h-2zM16 16h2v2h-2z" fill="#333" /></svg>
            </div>
          </div>
          <button class="submit">Submit</button>
        </section>

        <i v-for="m in [[107, 22], [201, 7], [289, 10], [463, 16]]" :key="m[0]" class="peek" :style="{ top: m[0] + 'px', height: m[1] + 'px' }"></i>
        <div class="dropdown">
          <div class="head"><b>分類</b><i></i></div>
          <ul>
            <li v-for="c in categories" :key="c.name"><svg width="28" height="28" viewBox="0 0 28 28" fill="#666" fill-rule="evenodd" overflow="visible" v-html="c.icon"></svg><span>{{ c.name }}</span></li>
          </ul>
        </div>
      </main>
      <div class="scroll"><div class="thumb"></div></div>
      <div class="hint">www.mews.mobi/news_form.php#</div>
    </div>
  </div>
</template>

<style>
body { margin: 0; background: #000; }
</style>

<style scoped>
.window { width: 2560px; height: 1600px; display: flex; flex-direction: column; overflow: hidden; border-radius: 10px; background: #f4f5f0; font-family: "Noto Sans", "Noto Sans CJK TC", sans-serif; color: #333; }
.tabs { height: 72px; box-sizing: border-box; flex: none; position: relative; background: linear-gradient(#67829e, #5a7490); border-top: 2px solid #a3b4c5; display: flex; }
.tabshape { margin-top: -1px; flex: none; }
.tabtitle { position: absolute; left: 73.5px; top: 29px; font-size: 23px; line-height: 32px; color: #000; transform-origin: 0 50%; transform: scaleX(.915); }
.incognito { margin: 12px 8px 0 auto; filter: drop-shadow(0 0 3px #33475b); }
.toolbar { height: 72px; box-sizing: border-box; flex: none; display: flex; align-items: center; border-top: 2px solid #999; border-bottom: 2px solid #7d7d7d; background: linear-gradient(#eaeaea, #d9d9d9); }
.nav { flex: none; margin-right: 20px; }
.omnibox { width: 2122px; height: 54px; box-sizing: border-box; border: 2px solid #9d9d9d; border-radius: 8px; background: #fff; display: flex; align-items: center; padding: 0 6px 0 12px; margin-top: -1px; }
.url { margin-left: 14px; font-size: 27px; line-height: 40px; white-space: nowrap; color: #000; letter-spacing: 1.13px; }
.url i { font-style: normal; color: #6b6b6b; }
.star { margin-left: auto; }
.extras { display: flex; align-items: center; padding-left: 20px; }
.extras svg + svg { margin-left: 22px; }
.extras svg + svg + svg { margin-left: 27px; }
.viewport { flex: 1; position: relative; display: flex; overflow: hidden; }
.card { position: relative; margin-left: 166px; width: 2200px; height: 1500px; border: solid #ccc; border-width: 0 2px; }
.top { height: 412px; border-bottom: 2px solid #ccc; display: flex; }
.fields { width: 1126px; flex: none; }
h2 { margin: -9px 0 0 25px; height: 40px; display: flex; align-items: flex-start; font-weight: 400; font-size: 27px; line-height: 28px; color: #2d2d2d; }
h2 svg { margin-top: 1px; }
h2 span { margin: -2px 0 0 9px; white-space: nowrap; -webkit-text-stroke: .2px; }
.check { margin: 209px 0 0 300px; }
.check button { display: block; width: 109px; height: 34px; box-sizing: border-box; padding: 0 14px 0 0; text-align: right; border: 2px solid #999; border-radius: 8px; background: linear-gradient(#fff 45%, #ececec 50%, #f5f5f5); font: 22px/28px "Noto Sans CJK TC", sans-serif; color: #000; box-shadow: 0 1px 2px #aaa; }
.input { margin: 52px 0 0 26px; width: 966px; height: 60px; box-sizing: border-box; border: 2px solid #c2c2c2; background: #fff; }
.map { flex: none; display: block; }
.lbl { text-anchor: middle; font-family: Roboto, "Noto Sans CJK TC", sans-serif; paint-order: stroke; stroke: #f6f4ee; stroke-width: 5px; stroke-linejoin: round; }
.place { fill: #87724a; }
.park { fill: #5c7a45; stroke: #eef2e2; }
.wood { fill: #23521e; stroke: #dfecc9; }
.bay { fill: #5577aa; stroke: #b5d1fc; }
.it { font-style: italic; }
.road { fill: #4d4942; font-size: 23px; }
.sm { font-size: 20px; fill: #5c564e; }
.tunnel { fill: #7c3d05; font-size: 22px; stroke: #fbe8cd; }
.corridor { text-anchor: start; font-size: 21px; stroke: #fcf0dc; }
.shield { font: 19px Roboto, sans-serif; text-anchor: middle; }
.logo { font: 40px "Liberation Serif", serif; fill: #fff; filter: drop-shadow(0 0 2px #777); }
.legal { font: 19.5px Roboto, "Noto Sans CJK TC", sans-serif; fill: #444; }
.edit { padding: 82px 26px 0; display: flex; flex-direction: column; align-items: flex-end; }
.editor { width: 2148px; height: 824px; box-sizing: border-box; border: 2px solid #9e9e9e; border-radius: 4px; background: #fff; display: flex; flex-direction: column; overflow: hidden; }
.bars { height: 162px; box-sizing: border-box; border-bottom: 2px solid #9e9e9e; background: linear-gradient(#fdfdfd, #ddd); padding-top: 4px; }
.bar { display: flex; gap: 4px; height: 48px; margin-bottom: 4px; }
.group { display: flex; border: 2px solid #bcbcbc; border-color: #d2d2d2 #c2c2c2 #b0b0b0 #b0b0b0; border-radius: 6px; background: linear-gradient(#fff, #d9d9d9); box-shadow: 0 1px 2px rgba(0, 0, 0, .12); overflow: hidden; }
.btn { width: 52px; height: 44px; box-sizing: border-box; display: flex; align-items: center; padding-left: 10px; color: #333; border-left: 1px solid rgba(0, 0, 0, .05); }
.btn:first-child { border-left-color: transparent; }
.btn svg { flex: none; filter: drop-shadow(2px 2px 0 rgba(255, 255, 255, .9)); }
.split { width: 82px; }
.off { color: #a3a3a3; }
.btn.text { padding-left: 8px; font: 24px "Liberation Sans", sans-serif; white-space: nowrap; }
.text span { letter-spacing: .02px; }
.caret { border: 8px solid transparent; border-top-color: #333; border-bottom: 0; }
.split .caret { margin: -4px 0 0 19px; }
.text .caret { margin: 0 10px 0 auto; }
.group .text:nth-child(n+2) .caret { margin-right: 16px; }
.letter { position: relative; width: 32px; height: 32px; margin: -4px -2px 0 -2px; text-align: center; font: bold 26px/38px "Liberation Sans", sans-serif; text-shadow: 2px 2px 0 #fff; }
.letter::after { content: ""; position: absolute; left: -2px; bottom: -6px; width: 32px; height: 4px; background: #888; }
.shade { background: #b9b9b9; text-shadow: none; }
.page { flex: 1; }
.status { height: 74px; box-sizing: border-box; border-top: 2px solid #9e9e9e; background: linear-gradient(#fdfdfd, #dcdcdc); display: flex; justify-content: space-between; align-items: center; padding: 0 7px 0 18px; font-size: 28px; line-height: 40px; }
.status span { margin-top: -2px; -webkit-text-stroke: .3px; }
.status svg { margin-top: 40px; }
.submit { display: block; width: 208px; height: 74px; margin: 10px 4px 0 0; border: 4px solid; border-color: #c0c0c0 #6d6d6d #6d6d6d #c0c0c0; border-radius: 10px; background: #6ba043; color: #fff; font: 800 22.2px "Open Sans", sans-serif; padding: 0; }
.peek { position: absolute; left: 25px; width: 12px; background: #111; }
.dropdown { position: absolute; left: 26px; top: 30px; width: 340px; background: #fff; }
.head { height: 68px; display: flex; }
.head b { width: 265px; box-sizing: border-box; padding-left: 20px; background: #9ac6dd; color: #000; font: bold 23px/65px "Noto Sans CJK TC", sans-serif; }
.head i { width: 0; height: 0; margin: 28px 0 0 19px; border: 12px solid transparent; border-top-color: #9ac6dd; border-bottom: 0; }
ul { list-style: none; margin: 0; padding: 0; }
li { height: 80px; display: flex; align-items: center; padding-left: 46px; font: 500 24px/36px "Noto Sans CJK TC", sans-serif; color: #999; }
li svg { margin-top: 1px; }
li span { margin: -9px 0 0 9px; }
li:last-child { background: #f2f8f8; }
.scroll { margin-left: auto; width: 30px; box-sizing: border-box; border-left: 2px solid #dcdcdc; background: linear-gradient(90deg, #ededed, #fafafa 40%, #fff 75%, #ededed); }
.thumb { width: 16px; height: 974px; margin: 382px 0 0 6px; border-radius: 8px; background: #c4c4c4; }
.hint { position: absolute; left: 0; bottom: 0; width: 854px; height: 36px; box-sizing: border-box; border: 2px solid #b0b0b0; border-radius: 0 6px 0 6px; background: #ebebeb; color: #000; font-size: 22.5px; line-height: 31px; letter-spacing: .1px; padding-left: 6px; }
</style>
